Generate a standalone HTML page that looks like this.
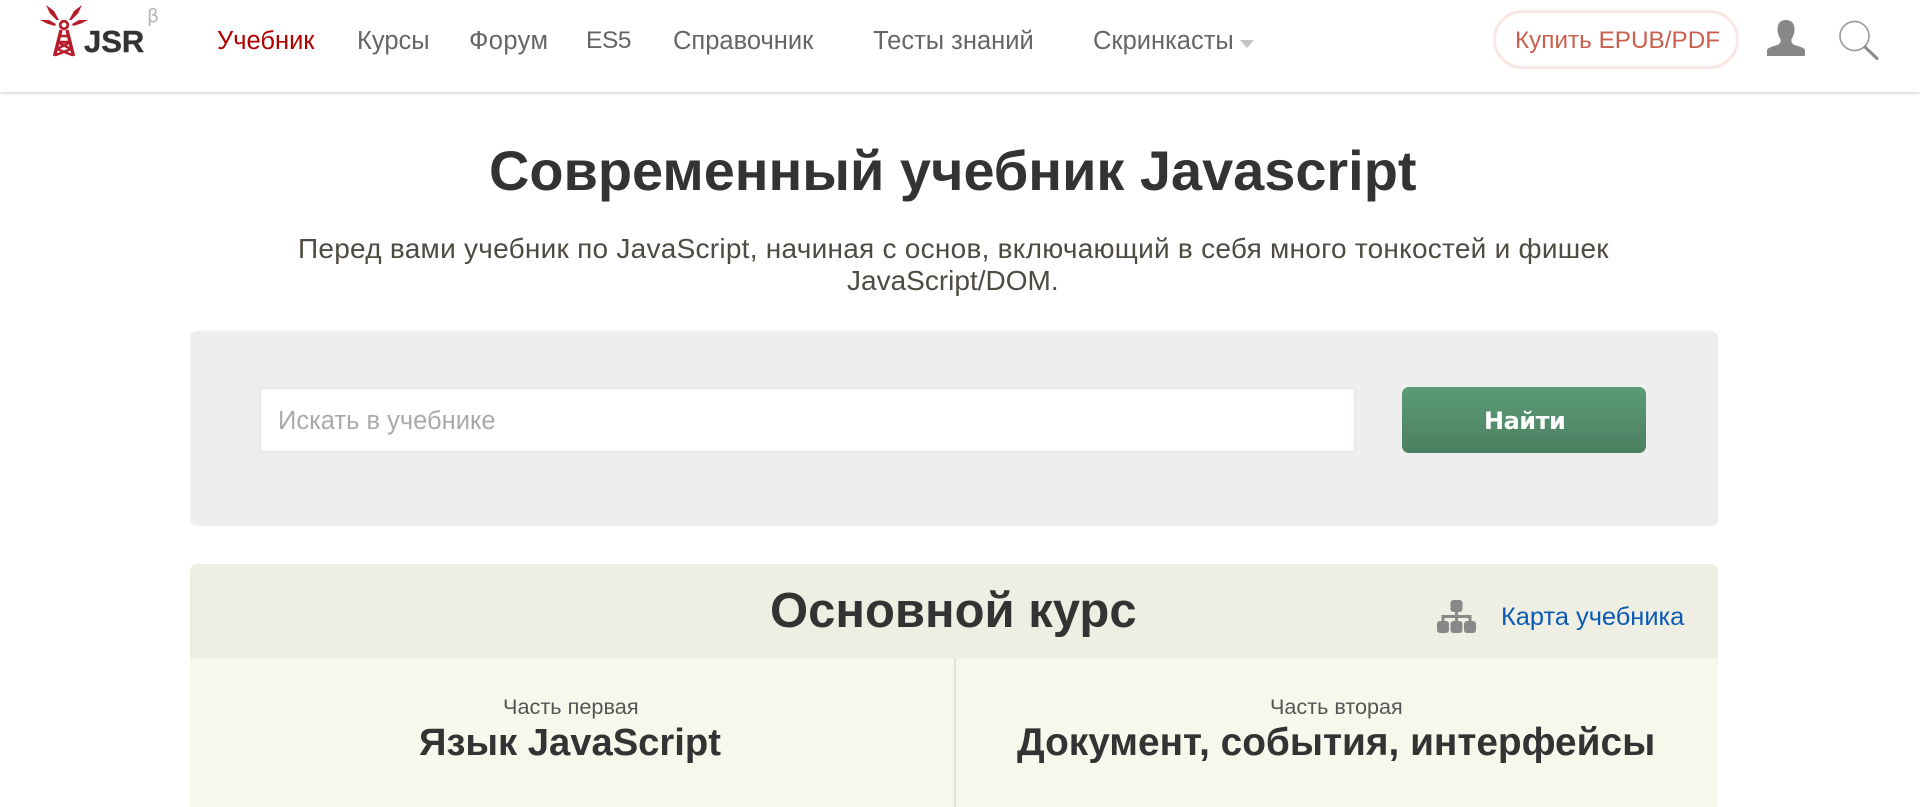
<!DOCTYPE html>
<html lang="ru">
<head>
<meta charset="utf-8">
<title>Современный учебник Javascript</title>
<style>
html,body{margin:0;padding:0;background:#fff;width:1920px;height:807px;overflow:hidden}
body{position:relative;font-family:"Liberation Sans","DejaVu Sans",sans-serif;color:#333}
.t{position:absolute;line-height:0;white-space:nowrap;margin:0;font-weight:normal;text-decoration:none}
.b{position:absolute;box-sizing:border-box}
header{position:absolute;left:0;top:0;width:1920px;height:92px;background:#fff;box-shadow:0 1px 3px rgba(0,0,0,.22)}
nav .t{font-size:25.5px;top:41px;color:#666}
svg{position:absolute;display:block}
</style>
</head>
<body>
<header>
<svg style="left:38px;top:3px" width="54" height="54" viewBox="38 3 54 54">
<g fill="#b71c2b">
<path d="M46 5 L54 11 L59 20 L56.500 20 L50 13.500Z"/>
<path d="M82 5 L74 11 L69 20 L71.500 20 L78 13.500Z"/>
<path d="M40 20 L49 20 L56 24 L55 26 L48 24Z"/>
<path d="M88 20 L79 20 L72 24 L73 26 L80 24Z"/>
</g>
<circle cx="64" cy="25" r="3.800" fill="none" stroke="#b71c2b" stroke-width="2.800"/>
<g fill="none" stroke="#b71c2b" stroke-width="3.400">
<path d="M61 30 L54.500 56"/>
<path d="M67 30 L73.500 56"/>
</g>
<g fill="none" stroke="#b71c2b" stroke-width="2.400">
<path d="M59 36 L69 36 M57.500 42 L70.500 42 M57.500 42 L71 49 M70.500 42 L57 49 M56 55 L71 49 M72 55 L57 49"/>
</g>
</svg>
<span class="t" style="left:84px;top:41.800px;font-size:31px;font-weight:bold;color:#333;-webkit-text-stroke:.4px #333">JSR</span>
<span class="t" style="left:147px;top:15.500px;font-size:19px;color:#b5b5b5;font-family:'DejaVu Sans',sans-serif">β</span>
<nav>
<a class="t" style="left:217px;color:#b20000">Учебник</a>
<a class="t" style="left:357px">Курсы</a>
<a class="t" style="left:469px;letter-spacing:.4px">Форум</a>
<a class="t" style="left:586px;font-size:24.500px;letter-spacing:-.4px">ES5</a>
<a class="t" style="left:673px">Справочник</a>
<a class="t" style="left:873px">Тесты знаний</a>
<a class="t" style="left:1093px">Скринкасты</a>
</nav>
<svg style="left:1240px;top:40px" width="14" height="8" viewBox="0 0 14 8"><path d="M0 0H14L7 8Z" fill="#c4c4c4"/></svg>
<div class="b" style="left:1493px;top:10px;width:246px;height:59px;border:3.5px solid #f8e7e4;border-radius:30px"></div>
<a class="t" style="left:1515px;top:40.500px;font-size:24.300px;color:#c9604f">Купить EPUB/PDF</a>
<svg style="left:1767px;top:20px" width="38" height="36" viewBox="0 0 38 36"><path d="M19 0C13 0 10.500 4 10.500 9C10.500 13 11.500 16 13.500 19C14 21 13.500 23 11.500 24.500C8 26 1 27 0 30V36H38V30C37 27 30 26 26.500 24.500C24.500 23 24 21 24.500 19C26.500 16 27.500 13 27.500 9C27.500 4 25 0 19 0Z" fill="#888"/></svg>
<svg style="left:1837px;top:19px" width="44" height="43" viewBox="0 0 44 43">
<circle cx="17.500" cy="17" r="14.500" fill="none" stroke="#a0a0a0" stroke-width="1.700"/>
<path d="M28 28L40 39.500" stroke="#8c8c8c" stroke-width="3" stroke-linecap="round"/>
</svg>
</header>

<h1 class="t" style="left:489px;top:170.500px;font-size:55.900px;font-weight:bold;color:#333">Современный учебник Javascript</h1>
<p class="t" style="left:298px;top:248.500px;font-size:28px;letter-spacing:.26px;color:#4e4b42">Перед вами учебник по JavaScript, начиная с основ, включающий в себя много тонкостей и фишек</p>
<p class="t" style="left:847px;top:281px;font-size:28px;color:#4e4b42">JavaScript/DOM.</p>

<div class="b" style="left:190px;top:331px;width:1528px;height:195px;background:#eee;border-radius:7px"></div>
<div class="b" style="left:259px;top:387px;width:1097px;height:66px;background:#fff;border:2px solid #e9e9e9;border-radius:4px;box-shadow:inset 0 0 6px rgba(0,0,0,.04)"></div>
<span class="t" style="left:278px;top:420.500px;font-size:25.500px;color:#aaa">Искать в учебнике</span>
<div class="b" style="left:1402px;top:387px;width:244px;height:66px;background:linear-gradient(#5b9c78,#4c7f61);border-radius:7px"></div>
<span class="t" style="left:1484px;top:420.500px;font-size:24px;letter-spacing:-.5px;font-weight:bold;color:#fff;font-family:'DejaVu Sans',sans-serif">Найти</span>

<div class="b" style="left:190px;top:564px;width:1528px;height:243px;background:#f7f7eb;border-radius:7px 7px 0 0"></div>
<div class="b" style="left:190px;top:564px;width:1528px;height:94px;background:#efeee3;border-radius:7px 7px 0 0"></div>
<div class="b" style="left:954px;top:658px;width:2px;height:149px;background:#e2e2d6"></div>
<h2 class="t" style="left:770px;top:611px;font-size:49px;font-weight:bold;color:#333">Основной курс</h2>
<svg style="left:1437px;top:600px" width="39" height="33" viewBox="0 0 39 33">
<g fill="#888"><rect x="13.500" y="0" width="12" height="12" rx="3"/><rect x="0" y="21" width="12" height="12" rx="3"/><rect x="13.500" y="21" width="12" height="12" rx="3"/><rect x="27" y="21" width="12" height="12" rx="3"/></g>
<path d="M19.500 12V22M6 22V16.500H33V22" fill="none" stroke="#888" stroke-width="3"/>
</svg>
<a class="t" style="left:1501px;top:616.500px;font-size:25.400px;color:#0a5ab4">Карта учебника</a>
<span class="t" style="left:503px;top:706.700px;font-size:21.700px;color:#555">Часть первая</span>
<h3 class="t" style="left:419px;top:742.500px;font-size:38.200px;font-weight:bold;color:#333">Язык JavaScript</h3>
<span class="t" style="left:1270px;top:706.700px;font-size:21.600px;color:#555">Часть вторая</span>
<h3 class="t" style="left:1017px;top:742.500px;font-size:38.800px;font-weight:bold;color:#333">Документ, события, интерфейсы</h3>
</body>
</html>
